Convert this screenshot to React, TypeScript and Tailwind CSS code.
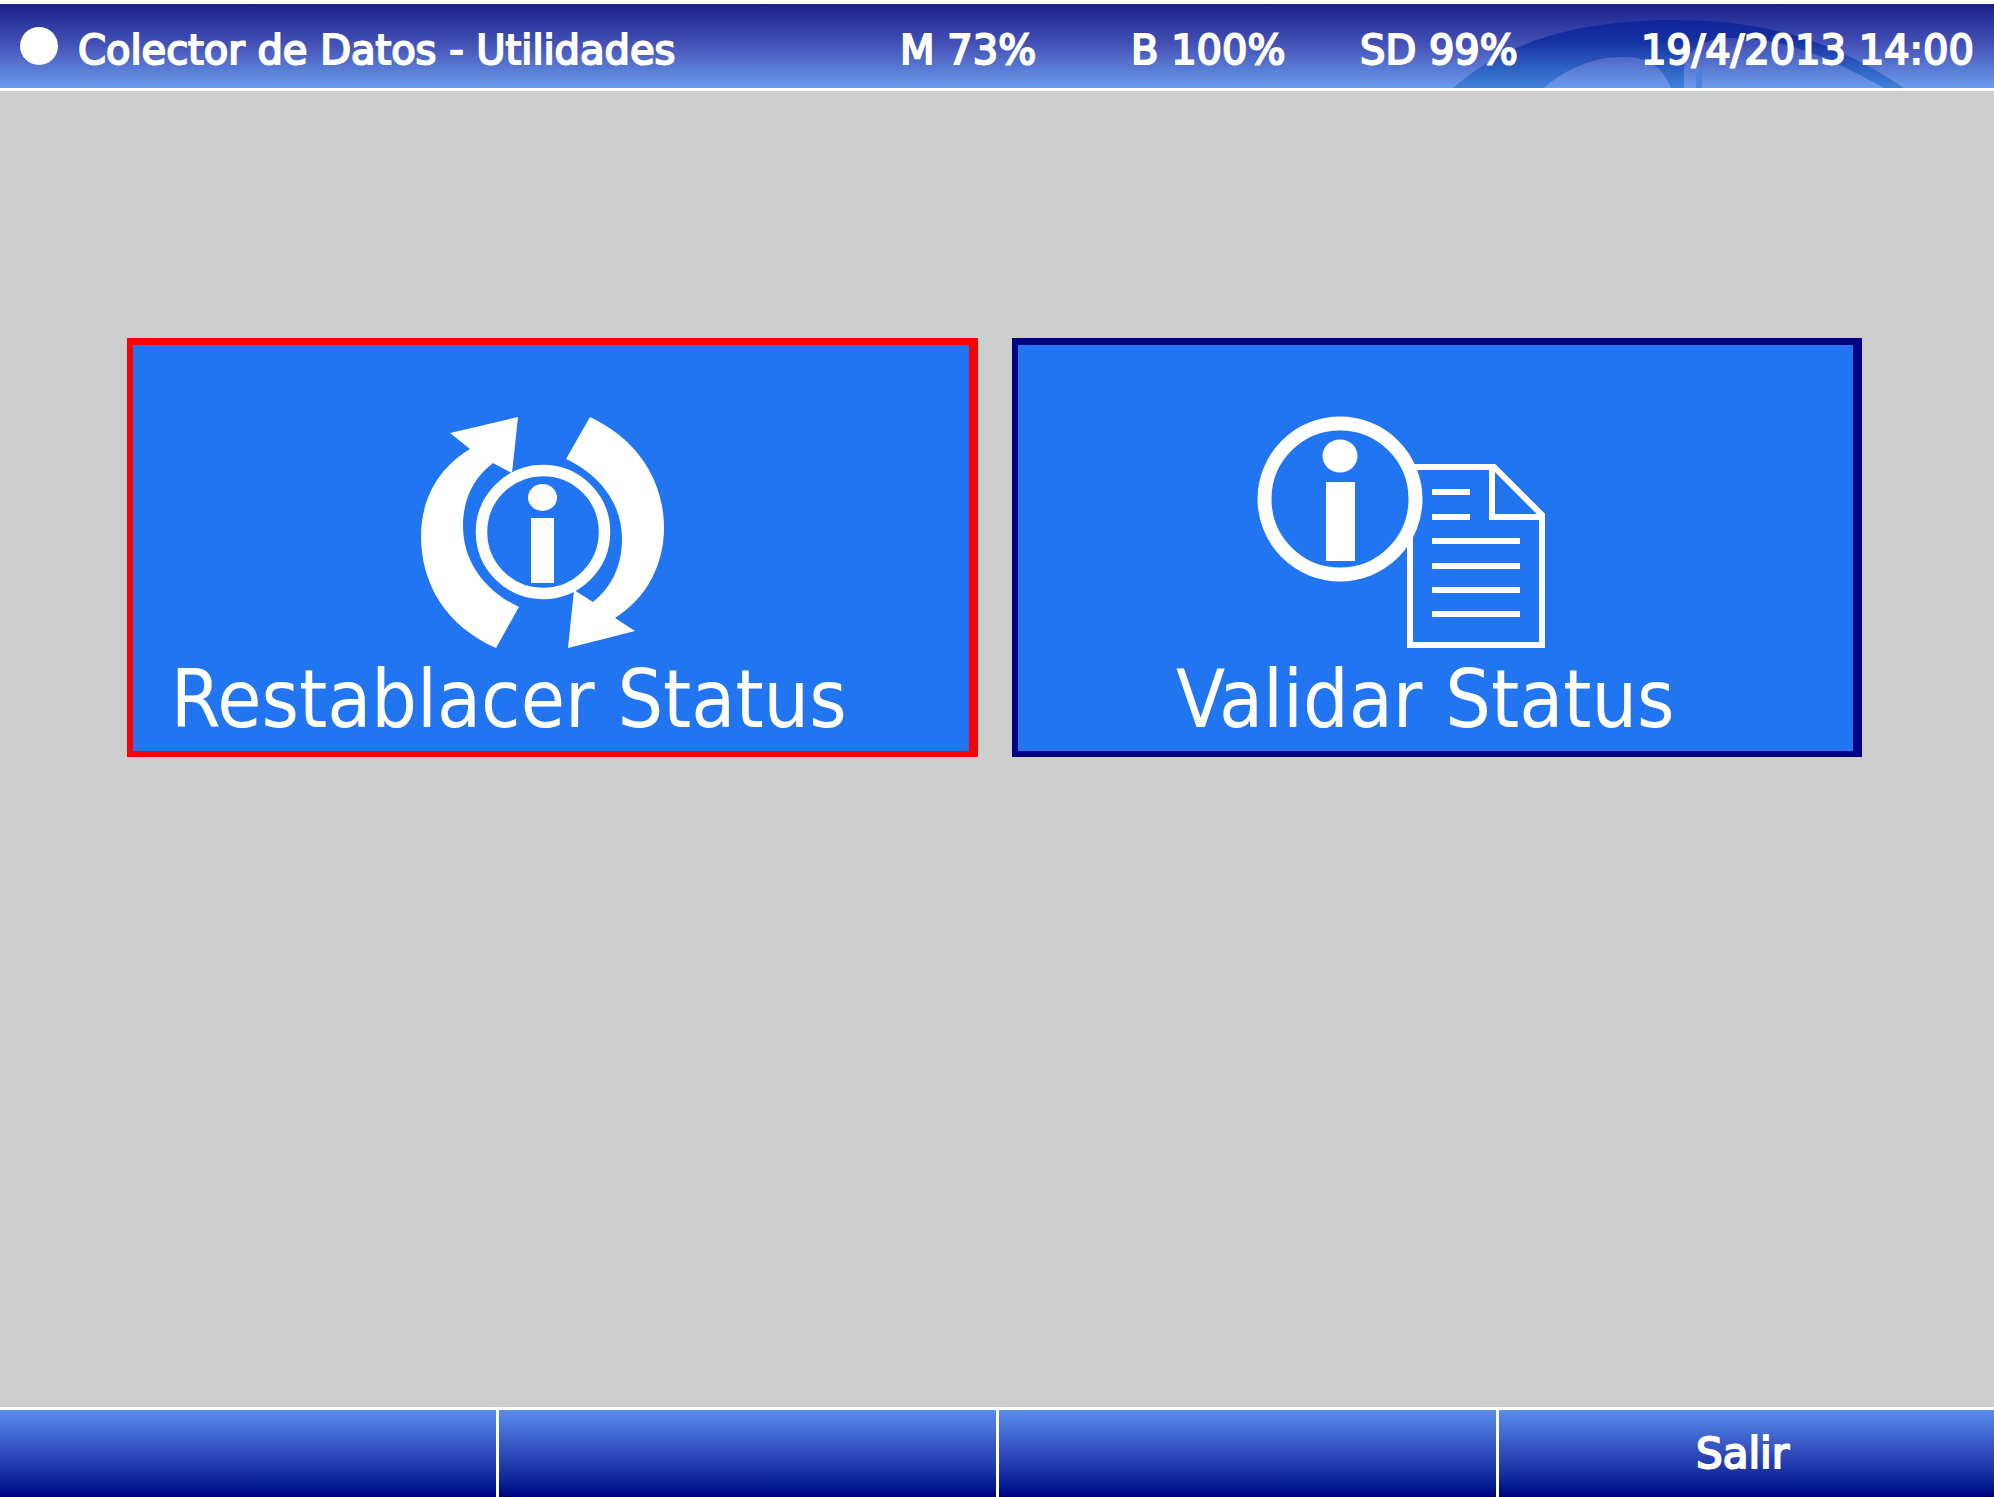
import type { ReactNode } from "react";

const stats = ["M 73%", "B 100%", "SD 99%"];

const softKeys = ["", "", "", "Salir"];

function HeaderEmblem() {
  return (
    <svg
      viewBox="0 0 460 84"
      className="absolute right-[84px] bottom-0 h-full w-[460px]"
      aria-hidden="true"
    >
      <defs>
        <linearGradient id="emblem" x1="0" y1="0" x2="0" y2="1">
          <stop offset="0" stopColor="#12249a" />
          <stop offset="0.3" stopColor="#15309f" />
          <stop offset="0.65" stopColor="#2b5abf" />
          <stop offset="1" stopColor="#3f82da" />
        </linearGradient>
      </defs>
      <path
        d="M3 84C50 42 120 16 223 16C320 16 385 38 454 84H434C405 68 370 50 340 42C310 34 280 32 262 36C244 42 234 52 234 66V84H221C214 66 202 53 172 53C142 53 114 66 94 84Z"
        fill="url(#emblem)"
      />
      <rect x="246" y="66" width="6" height="18" fill="#4a84dc" />
    </svg>
  );
}

function ResetStatusIcon() {
  return (
    <svg viewBox="0 0 280 260" className="h-[260px] w-[280px]" fill="#fff" aria-hidden="true">
      <path d="M95 248C45 226 20 184 20 136C20 100 37 68 69 49L49 33L117 17L111 73L92 63C72 78 62 100 62 126C62 160 82 190 118 207Z" />
      <path d="M189 17C238 40 263 82 263 128C263 164 246 198 214 218L234 231L167 248L173 190L192 202C211 187 221 165 221 139C221 105 201 76 165 59Z" />
      <circle cx="142" cy="132" r="61.500" fill="none" stroke="#fff" strokeWidth="11.500" />
      <ellipse cx="141.500" cy="97.500" rx="14.500" ry="13.500" />
      <rect x="130" y="118" width="23" height="65" />
    </svg>
  );
}

function ValidateStatusIcon() {
  return (
    <svg viewBox="0 0 372 260" className="h-[260px] w-[372px]" aria-hidden="true">
      <g fill="none" stroke="#fff" strokeWidth="6">
        <path d="M171 130V245H303V115L255 67H175" />
        <path d="M253 67V117H303" />
        <path d="M193 92H231M193 117H231M193 141H281M193 166H281M193 190H281M193 214H281" />
      </g>
      <circle cx="101" cy="99" r="75.500" fill="#2175f0" stroke="#fff" strokeWidth="14" />
      <ellipse cx="101" cy="56" rx="17.500" ry="16.500" fill="#fff" />
      <rect x="87" y="82" width="29" height="79" fill="#fff" />
    </svg>
  );
}

type TileProps = {
  label: string;
  icon: ReactNode;
  selected?: boolean;
};

function Tile({ label, icon, selected }: TileProps) {
  return (
    <button
      className={`flex flex-1 flex-col items-center border-t-[7px] border-r-[9px] border-b-[6px] border-l-[6px] bg-[#2175f0] pt-[55px] pr-5 pb-[11px] text-white ${
        selected ? "border-[#ff0000]" : "border-[#000084]"
      }`}
    >
      {icon}
      <span
        className={`text-[80px] leading-[80px] whitespace-nowrap ${selected ? "pr-16" : ""}`}
      >
        {label}
      </span>
    </button>
  );
}

export default function App() {
  return (
    <div className="flex min-h-screen flex-col bg-[#cecece] font-['DejaVu_Sans',sans-serif] text-white">
      <header className="relative h-[91px] border-t-4 border-b-[3px] border-white bg-linear-to-b from-[#1c1c8c] via-[#4654b8] to-[#6c9cec]">
        <HeaderEmblem />
        <div className="relative grid h-full grid-cols-[900fr_231fr_229fr_272fr_362fr] items-center pt-2 text-[40px] leading-[48px] whitespace-nowrap [-webkit-text-stroke:2px_white]">
          <div className="flex items-center gap-5 pl-5">
            <span className="mb-2 size-[38px] rounded-full bg-white" />
            <h1>Colector de Datos - Utilidades</h1>
          </div>
          {stats.map((s) => (
            <span key={s}>{s}</span>
          ))}
          <time className="pr-5 text-right">19/4/2013 14:00</time>
        </div>
      </header>

      <main className="flex flex-1 items-start gap-[34px] pt-[247px] pr-[132px] pl-[127px] font-['DejaVu_Sans_Condensed','DejaVu_Sans',sans-serif]">
        <Tile label="Restablacer Status" icon={<ResetStatusIcon />} selected />
        <Tile label="Validar Status" icon={<ValidateStatusIcon />} />
      </main>

      <footer className="grid h-[90px] grid-cols-[499fr_500fr_500fr_495fr] divide-x-3 divide-white border-t-[3px] border-white bg-linear-to-b from-[#5a8cec] via-[#304abc] to-[#000080]">
        {softKeys.map((k, i) => (
          <button
            key={i}
            aria-label={k || `F${i + 1}`}
            className="pr-2 text-[42px] leading-[48px] [-webkit-text-stroke:2px_white]"
          >
            {k}
          </button>
        ))}
      </footer>
    </div>
  );
}
